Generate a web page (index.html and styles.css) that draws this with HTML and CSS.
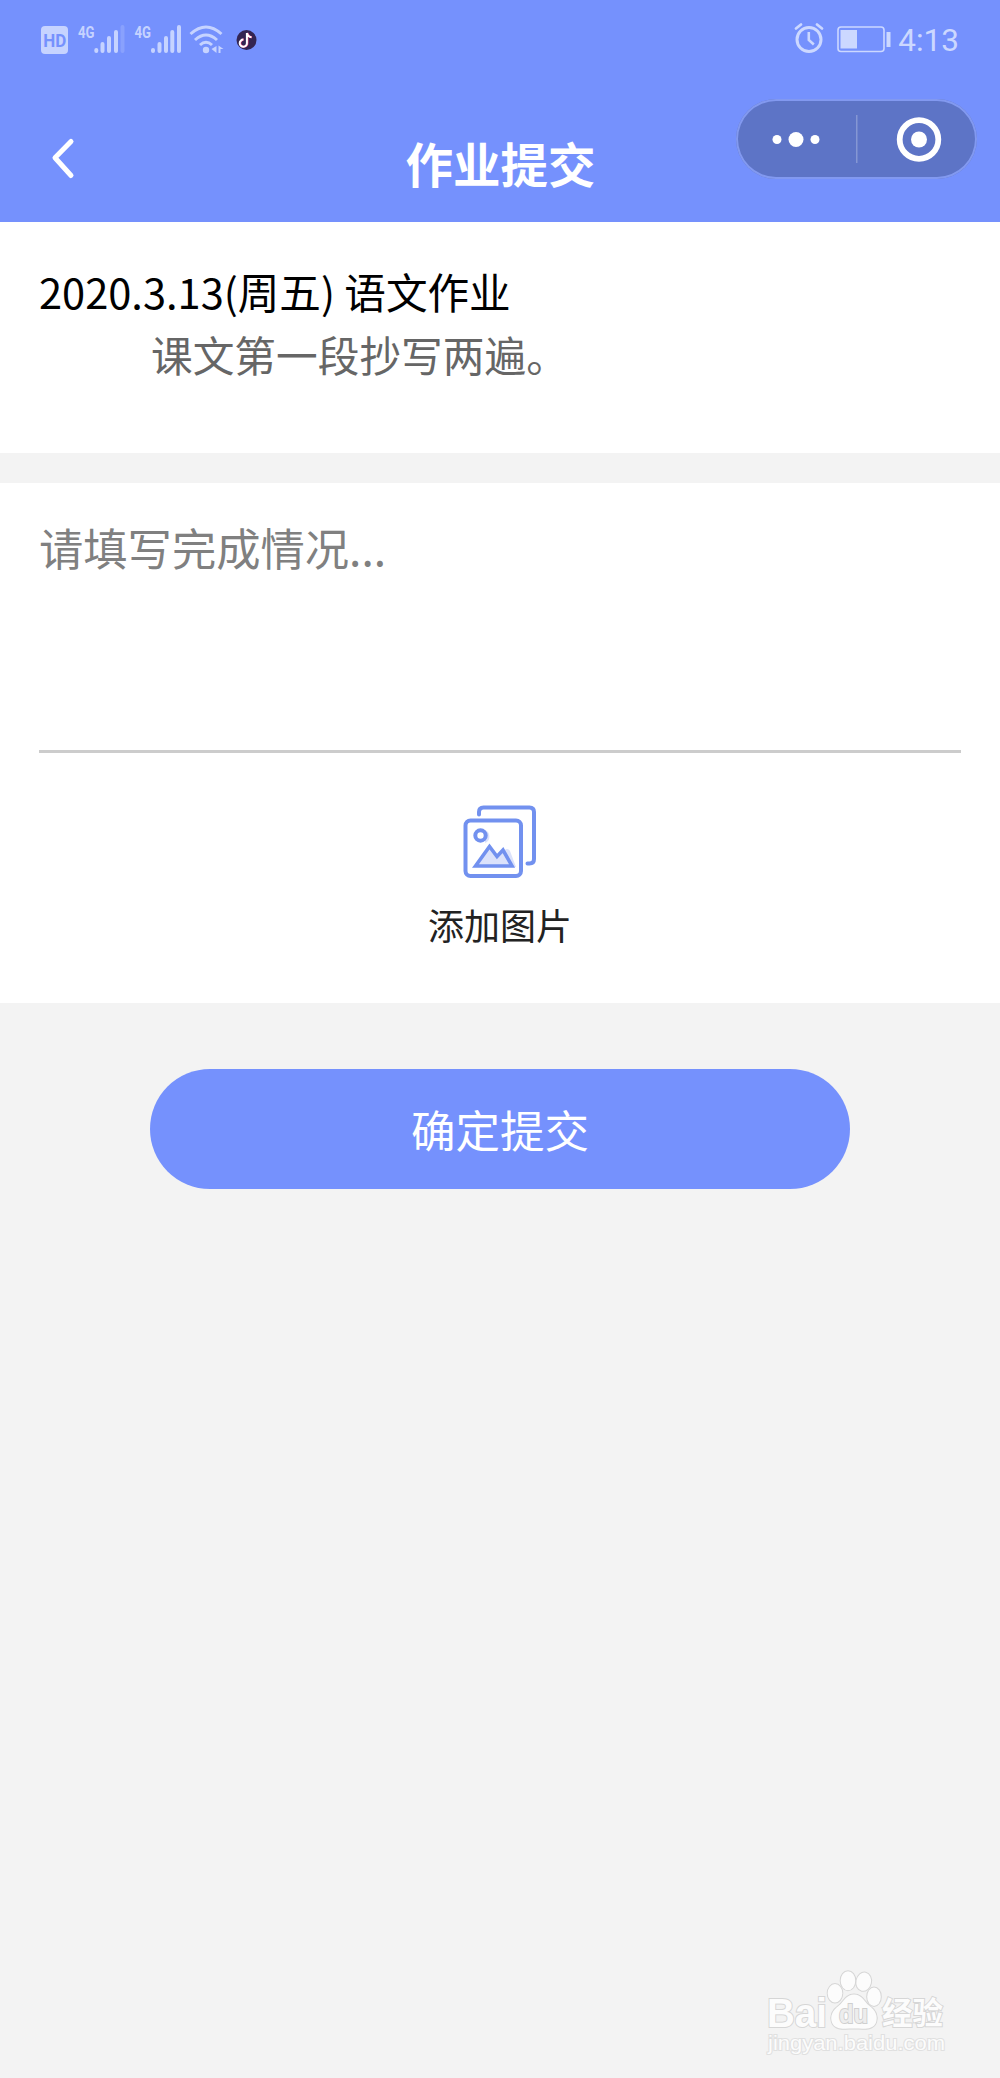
FILE: index.html
```html
<!DOCTYPE html>
<html lang="zh-CN">
<head>
<meta charset="utf-8">
<title>作业提交</title>
<link rel="stylesheet" href="styles.css">
</head>
<body>
<header class="header">
  <div class="status">
    <svg class="status-left" width="240" height="40" viewBox="0 0 240 40" fill="#c6d3ff">
      <rect x="1" y="6" width="27" height="28" rx="4"/>
      <text class="hd" x="3.2" y="26.5" textLength="23" lengthAdjust="spacingAndGlyphs">HD</text>
      <text class="net" x="38" y="17.500" textLength="16.500" lengthAdjust="spacingAndGlyphs">4G</text>
      <path d="M56.300 30v1M62.500 24v7M69 18v13M76 12v19" class="bars"/>
      <path d="M82.500 7v24" class="bars faint"/>
      <text class="net" x="94.500" y="17.500" textLength="16.500" lengthAdjust="spacingAndGlyphs">4G</text>
      <path d="M113 30v1M119.500 24v7M126 18v13M132.300 12v19M139 7v24" class="bars"/>
      <path d="M150.500 14q15.500-14 31 0M155 20q11-10 22 0M160 25q6-5.500 12 0" class="wave"/>
      <circle cx="166" cy="30" r="3.200"/>
      <path d="M176.500 26v7l-5-4zM178.500 25.500l5 3.500h-3v4h-2z"/>
      <circle cx="206.500" cy="20" r="10" fill="#332552"/>
      <path d="M207.500 13v10a3.600 3.600 0 1 1-3.600-3.400M207.500 13q1 4 4.500 4.300" class="note pink"/>
      <path d="M206.900 13v10a3.600 3.600 0 1 1-3.600-3.400M206.900 13q1 4 4.500 4.300" class="note"/>
    </svg>
    <div class="status-right">
      <svg width="102" height="40" viewBox="0 0 102 40" fill="none" stroke="#ccd8ff">
        <circle cx="15" cy="19.500" r="12" stroke-width="3"/>
        <path d="M14.800 12v8l5 4.500" stroke-width="2.600"/>
        <path d="M2 8.500l5-4M28 8.500l-5-4" stroke-width="2.800" stroke-linecap="round"/>
        <rect x="44" y="7" width="46" height="24.500" rx="3" stroke-width="1.600"/>
        <rect x="46.500" y="10" width="16.500" height="18.500" fill="#ccd8ff" stroke="none"/>
        <path d="M94.500 12v15" stroke-width="4"/>
      </svg>
      <span class="clock">4:13</span>
    </div>
  </div>
  <div class="nav">
    <svg class="back" width="28" height="44" viewBox="0 0 28 44"><path d="M21 5.500L5 21.800L21 39.500"/></svg>
    <h1 class="nav-title">作业提交</h1>
    <div class="capsule">
      <svg width="240" height="80" viewBox="0 0 240 80" fill="#fff">
        <circle cx="41" cy="40.500" r="4.500"/><circle cx="60" cy="40.500" r="7.500"/><circle cx="79" cy="40.500" r="4.500"/>
        <rect x="120" y="16" width="1.500" height="48" opacity=".25"/>
        <circle cx="183" cy="40.500" r="19.300" fill="none" stroke="#fff" stroke-width="5.800"/>
        <circle cx="183" cy="40.500" r="8"/>
      </svg>
    </div>
  </div>
</header>
<main>
  <section class="task">
    <h2 class="task-title">2020.3.13(周五) 语文作业</h2>
    <p class="task-text">课文第一段抄写两遍。</p>
  </section>
  <section class="answer">
    <div class="field">请填写完成情况...</div>
    <div class="upload">
      <svg width="76" height="76" viewBox="0 0 76 76" fill="none" stroke="#7291ef" stroke-width="4" stroke-linecap="round" stroke-linejoin="round">
        <path d="M17 11.500V9q0-4.500 4.500-4.500h46q4.500 0 4.500 4.500v47q0 4.500-4.500 4.500h-2"/>
        <rect x="3.500" y="17.500" width="55.500" height="55.500" rx="5"/>
        <path d="M23 27a7 7 0 0 1 0 13zM40 50q5-7 8-2l6 16H31z" fill="#dbe2fb" stroke="none"/>
        <circle cx="18.500" cy="32.500" r="5.200"/>
        <path d="M13.500 63L27.500 43.500l7.500 10 6-6.500L50 63z" fill="#dbe2fb" stroke-width="3.600" stroke-linejoin="miter"/>
      </svg>
      <span class="upload-label">添加图片</span>
    </div>
  </section>
  <button class="submit">确定提交</button>
</main>
<svg class="watermark" width="190" height="96" viewBox="0 0 190 96">
  <g class="paw">
    <ellipse cx="85" cy="27.300" rx="7.300" ry="9.200"/>
    <ellipse cx="98" cy="14.700" rx="7.300" ry="9.500"/>
    <ellipse cx="113.700" cy="15.700" rx="7.300" ry="9.200" transform="rotate(12 113.700 15.700)"/>
    <ellipse cx="124" cy="30.700" rx="6.800" ry="9.200"/>
    <path d="M104 28.500c-8 0-10 7-15 11-7 5-9 11-7 17 3 8 13 6 22 6s19 2 22-6c2-6 0-12-7-17-5-4-7-11-15-11z"/>
  </g>
  <text class="latin" x="17" y="60.500" textLength="60" lengthAdjust="spacingAndGlyphs">Bai</text>
  <text class="du" x="89" y="57" textLength="29" lengthAdjust="spacingAndGlyphs">du</text>
  <text class="cjk" x="132" y="58" textLength="61" lengthAdjust="spacingAndGlyphs">经验</text>
  <text class="url" x="18" y="84" textLength="177" lengthAdjust="spacingAndGlyphs">jingyan.baidu.com</text>
</svg>
</body>
</html>
```
FILE: styles.css
```css
* { box-sizing: border-box; }
body {
  margin: 0;
  min-height: 2078px;
  position: relative;
  background: #f3f3f3;
  font-family: "Noto Sans CJK SC", sans-serif;
}
svg { display: block; flex: none; }
h1, h2, p { margin: 0; font-weight: 400; }
.header {
  height: 222px;
  background: #7591fd;
  color: #fff;
}
.status {
  display: flex;
  justify-content: space-between;
  height: 80px;
  padding: 20px 41px 0 40px;
}
.status-right { display: flex; gap: 2px; }
.clock {
  font: 31.5px/41px Roboto, sans-serif;
  color: #ccd8ff;
}
.hd { font: bold 18px Roboto, sans-serif; fill: #7591fd; }
.net { font: bold 16px Roboto, sans-serif; }
.bars { stroke: #c6d3ff; stroke-width: 4; stroke-linecap: round; fill: none; }
.faint { opacity: .25; }
.wave { stroke: #c6d3ff; stroke-width: 3; fill: none; }
.note { stroke: #fff; stroke-width: 2; fill: none; }
.pink { stroke: #e8487f; }
.nav {
  display: grid;
  grid-template-columns: 263px 474px 263px;
  height: 142px;
}
.back {
  margin: 56px 0 0 50px;
  fill: none;
  stroke: #fff;
  stroke-width: 5;
  stroke-linecap: round;
  stroke-linejoin: round;
}
.nav-title {
  padding: 48px 0 0 1px;
  text-align: center;
  font-size: 47.5px;
  line-height: 70px;
  font-weight: 700;
}
.capsule {
  width: 241px;
  height: 80px;
  margin: 19px 0 0 -1px;
  border-radius: 40px;
  background: #5d74c6;
  box-shadow: inset 0 0 0 2px #8299f0;
}
.task {
  height: 231px;
  padding: 38px 39px;
  background: #fff;
}
.task-title {
  font-size: 41.6px;
  line-height: 62px;
  color: #000;
}
.task-text {
  padding: 1px 0 0 112px;
  font-size: 41.7px;
  line-height: 62px;
  color: #666;
}
.answer {
  height: 520px;
  margin-top: 30px;
  padding: 33px 39px 0;
  background: #fff;
}
.field {
  height: 237px;
  border-bottom: 3px solid #ccc;
  font-size: 44.3px;
  line-height: 62px;
  color: #808080;
}
.upload {
  display: flex;
  flex-direction: column;
  align-items: center;
  padding-top: 50px;
}
.upload-label {
  margin-top: 19px;
  font-size: 36px;
  line-height: 52px;
  color: #222;
}
.submit {
  display: block;
  width: 700px;
  height: 120px;
  margin: 66px auto 0;
  padding: 0 0 2px;
  border: 0;
  border-radius: 60px;
  background: #7591fd;
  color: #fff;
  font-family: inherit;
  font-size: 44.5px;
}
.watermark {
  position: absolute;
  left: 750px;
  top: 1966px;
  overflow: visible;
}
.watermark text, .paw {
  fill: #fcfcfc;
  stroke: #d6d6d6;
  stroke-width: 2;
  paint-order: stroke;
}
.latin { font: bold 40px "Liberation Sans", sans-serif; }
.watermark .du {
  font: bold 26px "Liberation Sans", sans-serif;
  fill: #ededed;
  stroke: #cfcfcf;
}
.cjk { font: bold 31px "Noto Sans CJK SC", sans-serif; }
.watermark .url {
  font: 21px "Liberation Sans", sans-serif;
  stroke: #e0e0e0;
}
```
